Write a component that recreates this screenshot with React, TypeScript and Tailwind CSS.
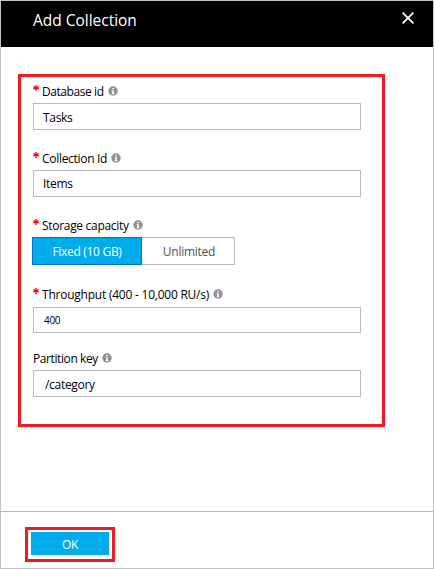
import type { ReactNode } from "react";

function InfoIcon() {
  return (
    <svg className="mt-[3px] ml-1 size-[10px] shrink-0" viewBox="0 0 10 10" aria-hidden="true">
      <circle cx="5" cy="5" r="4.7" fill="#919191" />
      <path d="M4.2 2h1.6v1.3H4.2zM3.7 4.2h2.1v3.1h.6v.9H3.6v-.9h.7V5.1h-.6z" fill="#fff" />
    </svg>
  );
}

function RequiredMark() {
  return (
    <svg className="mt-[2px] mr-[3px] size-[6px] shrink-0" viewBox="0 0 6 6" aria-hidden="true">
      <path d="M3 0v6M.3 1.7l5.4 2.4M5.7 1.7L.3 4.1" stroke="#f00" strokeWidth="1.3" fill="none" />
    </svg>
  );
}

type LabelProps = { text: string; spacing: string; required?: boolean };

function Label({ text, spacing, required = true }: LabelProps) {
  return (
    <div className="flex h-5 items-start text-[12px] leading-[17px] whitespace-nowrap text-black">
      {required && <RequiredMark />}
      <span className={spacing}>{text}</span>
      <InfoIcon />
    </div>
  );
}

function Field({ children, className = "" }: { children: ReactNode; className?: string }) {
  return (
    <div className={`flex w-[328px] items-center border border-[#bababa] bg-white text-[12px] text-black ${className}`}>
      {children}
    </div>
  );
}

export default function App() {
  return (
    <div className="flex h-[569px] w-[434px] flex-col border border-[#c3c3c3] bg-white font-['Open_Sans','Noto_Sans',sans-serif]">
      <header className="flex h-[46px] shrink-0 items-start justify-between bg-black pr-[19px] pl-8">
        <h1 className="pt-[7px] text-[15.5px] leading-6 tracking-[-0.02px] text-white">Add Collection</h1>
        <button type="button" aria-label="Close" className="mt-[11px]">
          <svg className="size-3" viewBox="0 0 12 12" aria-hidden="true">
            <path d="M.6.6l10.8 10.8M11.4.6L.6 11.4" stroke="#fff" strokeWidth="1.8" />
          </svg>
        </button>
      </header>

      <main className="h-[464px] shrink-0 pt-[27px] pl-[17px]">
        <section className="h-[353px] w-[367px] border-[3px] border-[#ed1c24] pt-[6px] pl-3">
          <Label text="Database id" spacing="tracking-[-0.43px]" />
          <Field className="mb-5 h-[27px] pt-[2px] pl-[9px]">
            <span className="tracking-[-0.3px]">Tasks</span>
          </Field>

          <Label text="Collection Id" spacing="tracking-[-0.3px]" />
          <Field className="mb-5 h-[27px] pt-px pl-[9px]">
            <span className="tracking-[-0.3px]">Items</span>
          </Field>

          <Label text="Storage capacity" spacing="tracking-[-0.3px]" />
          <div className="mb-[21px] -ml-px flex h-7 text-[12px]">
            <button type="button" className="w-[110px] border border-[#0072c6] bg-[#00abec] pt-[2px] text-white">
              <span className="tracking-[-0.3px]">Fixed (10 GB)</span>
            </button>
            <button type="button" className="w-[93px] border border-l-0 border-[#bababa] bg-white pt-[2px] pl-[2px] text-[#505050]">
              <span className="tracking-[-0.25px]">Unlimited</span>
            </button>
          </div>

          <Label text="Throughput (400 - 10,000 RU/s)" spacing="tracking-[-0.23px]" />
          <Field className="mt-px mb-[17px] h-[26px] pl-[10px]">
            <span className="text-[10px] tracking-[-0.3px]">400</span>
          </Field>

          <Label text="Partition key" spacing="tracking-[-0.4px]" required={false} />
          <Field className="h-[27px] pt-[2px] pl-[11px]">
            <span className="tracking-[-0.3px]">/category</span>
          </Field>
        </section>
      </main>

      <footer className="flex-1 border-t border-[#bababa] pt-[15px] pl-6">
        <div className="h-[35px] w-[90px] border-[3px] border-[#ed1c24] pt-[2px] pl-[3px]">
          <button type="button" className="flex h-[23px] w-[78px] items-center justify-center bg-[#00abec] pt-[2px] text-[12px] text-white">
            <span className="tracking-[-0.4px]">OK</span>
          </button>
        </div>
      </footer>
    </div>
  );
}
